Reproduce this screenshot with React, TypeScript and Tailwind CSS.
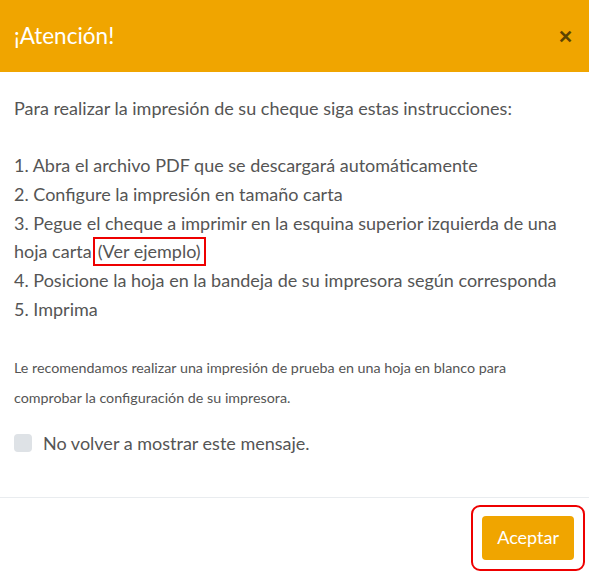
export default function App() {
  const font = { fontFamily: '"Source Sans Pro", Lato, "Open Sans", sans-serif' };
  return (
    <div className="w-[589px] h-[576px] bg-white text-[#555] overflow-hidden" style={font}>
      <div className="h-[72px] bg-[#f0a500] flex items-center justify-between pl-[14px] pr-[16px]">
        <h1 className="text-[22.5px] text-white">¡Atención!</h1>
        <button className="text-[#5c4300] text-[18px] font-bold leading-none">✕</button>
      </div>
      <div className="px-[14px] pt-[22px]">
        <p className="text-[18px] leading-[29px]">Para realizar la impresión de su cheque siga estas instrucciones:</p>
        <div className="mt-[28px] text-[18px] leading-[28.8px]">
          <div>1. Abra el archivo PDF que se descargará automáticamente</div>
          <div>2. Configure la impresión en tamaño carta</div>
          <div>
            3. Pegue el cheque a imprimir en la esquina superior izquierda de una hoja carta
            <span className="inline-block align-top border-2 border-[#e00] leading-[25px] px-[3px] ml-[1px]">(Ver ejemplo)</span>
          </div>
          <div>4. Posicione la hoja en la bandeja de su impresora según corresponda</div>
          <div>5. Imprima</div>
        </div>
        <p className="mt-[29px] text-[14.3px] leading-[30px]">
          Le recomendamos realizar una impresión de prueba en una hoja en blanco para comprobar la configuración de su impresora.
        </p>
        <label className="mt-[17px] flex items-center gap-[11px] text-[18px]">
          <span className="w-[18px] h-[18px] rounded-[4px] bg-[#dee2e6] inline-block"></span>
          No volver a mostrar este mensaje.
        </label>
      </div>
      <div className="mt-[40px] border-t border-[#e9ecef] flex justify-end pr-[4px] pt-[7px]">
        <div className="border-2 border-[#e00] rounded-[9px] p-[9px]">
          <button className="bg-[#f0a500] text-white text-[18px] rounded-[4px] px-[15px] h-[44px]">Aceptar</button>
        </div>
      </div>
    </div>
  );
}
